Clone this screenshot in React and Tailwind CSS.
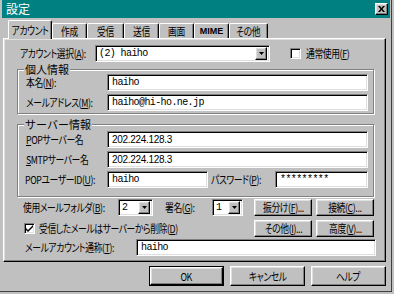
import React from 'react'

const sunken = "bg-white border border-t-[#808080] border-l-[#808080] border-b-white border-r-white shadow-[inset_1px_1px_0_#000,inset_-1px_-1px_0_#dfdfdf]"
const raised = "bg-[#c0c0c0] border border-t-white border-l-white border-b-black border-r-black shadow-[inset_-1px_-1px_0_#808080,inset_1px_1px_0_#dfdfdf]"
// MS PGothic is much narrower than Noto, so the labels are squeezed horizontally
const jpBase = "inline-block font-['Noto_Sans_CJK_JP',sans-serif] [font-feature-settings:'palt'] text-[11px] tracking-[-0.5px] leading-none text-black whitespace-nowrap shrink-0 scale-x-[0.8]"
const jp = `${jpBase} origin-left`
const jpC = `${jpBase} origin-center`
const mono = "font-['Liberation_Mono',monospace] text-[10px] tracking-[-0.6px] leading-none text-black"
const ip = "font-['Liberation_Sans',sans-serif] text-[10px] tracking-[-0.3px] leading-none text-black"

function Label({ className, children }) {
  return (
    <div className={`${className} shrink-0 flex items-center`}>
      <span className={jp}>{children}</span>
    </div>
  )
}

function Arrow() {
  return (
    <div className={`${raised} w-[12px] h-[13px] shrink-0 flex items-center justify-center`}>
      <svg width="5" height="3" viewBox="0 0 5 3"><path d="M0 0h5L2.5 3z" fill="#000" /></svg>
    </div>
  )
}

function Combo({ className, children }) {
  return (
    <div className={`${sunken} ${className} shrink-0 h-[17px] flex items-center pl-[3px] pr-[2px] justify-between`}>
      <span className={mono}>{children}</span>
      <Arrow />
    </div>
  )
}

function Check({ checked }) {
  return (
    <div className={`${sunken} w-[11px] h-[11px] shrink-0 flex items-center justify-center`}>
      {checked && (
        <svg width="7" height="7" viewBox="0 0 7 7"><path d="M0 3l2 2 5-5v2L2 7 0 5z" fill="#000" /></svg>
      )}
    </div>
  )
}

function Btn({ className, children }) {
  return (
    <div className={`${raised} ${className} shrink-0 h-[17px] flex items-center justify-center`}>
      <span className={jpC}>{children}</span>
    </div>
  )
}

function Tab({ className, active, children }) {
  return (
    <div
      className={`${className} bg-[#c0c0c0] border-l border-t border-l-white border-t-white border-r border-r-black shadow-[inset_-1px_0_0_#808080] rounded-t-[2px] flex justify-center ${active ? 'h-[19px] -mb-[1px] z-10 relative pt-[4px]' : 'h-[15px] pt-[2px]'}`}
    >
      {children}
    </div>
  )
}

function Group({ className, title, children }) {
  return (
    <fieldset className={`${className} border border-[#808080] shadow-[inset_1px_1px_0_#fff,1px_1px_0_#fff] px-0`}>
      <legend className="ml-[6px] px-[1px] h-[10px] bg-[#c0c0c0] flex items-center">
        <span className="font-['Noto_Sans_CJK_JP',sans-serif] text-[11px] leading-none text-black whitespace-nowrap">{title}</span>
      </legend>
      {children}
    </fieldset>
  )
}

function Edit({ className, font, children }) {
  return (
    <div className={`${sunken} ${className} h-[17px] shrink-0 flex items-center pl-[4px]`}>
      <span className={font || mono}>{children}</span>
    </div>
  )
}

export default function App() {
  return (
    <div className="w-[394px] h-[294px] bg-[#c0c0c0] overflow-hidden">
      <div className="w-[392px] h-[292px] border-r border-b border-r-[#404040] border-b-[#404040] flex flex-col">
        <div className="h-[18px] shrink-0 ml-[2px] mr-[1px] bg-[#008080] flex items-center justify-between pl-[4px] pr-[2px]">
          <span className="font-['Noto_Sans_CJK_JP',sans-serif] text-[12px] leading-none text-white">設定</span>
          <div className={`${raised} w-[13px] h-[12px] flex items-center justify-center`}>
            <svg width="7" height="6" viewBox="0 0 7 6"><path d="M0 0h2l1.5 2L5 0h2L4.5 3 7 6H5L3.5 4 2 6H0l2.5-3z" fill="#000" /></svg>
          </div>
        </div>

        <div className="mt-[3px] ml-[8px] h-[17px] shrink-0 flex items-end">
          <Tab className="w-[44px]" active><span className={jpC}>アカウント</span></Tab>
          <Tab className="w-[35px]"><span className={jpC}>作成</span></Tab>
          <Tab className="w-[37px]"><span className={jpC}>受信</span></Tab>
          <Tab className="w-[35px]"><span className={jpC}>送信</span></Tab>
          <Tab className="w-[35px]"><span className={jpC}>画面</span></Tab>
          <Tab className="w-[35px]">
            <span className="font-['Liberation_Sans',sans-serif] text-[9px] font-bold leading-none pt-[1px]">MIME</span>
          </Tab>
          <Tab className="w-[39px]"><span className={jpC}>その他</span></Tab>
        </div>

        <div className={`${raised} ml-[3px] w-[383px] h-[224px] shrink-0 flex flex-col`}>
          <div className="mt-[6px] flex items-center">
            <Label className="ml-[16px] w-[75px]">アカウント選択(<u>A</u>):</Label>
            <Combo className="w-[175px]">(2) haiho</Combo>
            <div className="ml-[20px]"><Check /></div>
            <span className={`${jp} ml-[5px]`}>通常使用(<u>F</u>)</span>
          </div>

          <Group className="mt-[2px] ml-[13px] w-[357px] pb-[2px]" title="個人情報">
            <div className="flex items-center">
              <Label className="ml-[8px] w-[81px]">本名(<u>N</u>):</Label>
              <Edit className="w-[261px]">haiho</Edit>
            </div>
            <div className="mt-[3px] flex items-center">
              <Label className="ml-[8px] w-[81px]">メールアドレス(<u>M</u>):</Label>
              <Edit className="w-[261px]">haiho@hi-ho.ne.jp</Edit>
            </div>
          </Group>

          <Group className="mt-[5px] ml-[13px] w-[357px] pb-[8px]" title="サーバー情報">
            <div className="mt-[2px] flex items-center">
              <Label className="ml-[8px] w-[81px]"><u>P</u>OPサーバー名</Label>
              <Edit className="w-[261px]" font={ip}>202.224.128.3</Edit>
            </div>
            <div className="mt-[3px] flex items-center">
              <Label className="ml-[8px] w-[81px]"><u>S</u>MTPサーバー名</Label>
              <Edit className="w-[261px]" font={ip}>202.224.128.3</Edit>
            </div>
            <div className="mt-[3px] flex items-center">
              <Label className="ml-[7px] w-[82px]">POPユーザーID(<u>U</u>):</Label>
              <Edit className="w-[101px]">haiho</Edit>
              <Label className="ml-[3px] w-[64px]">パスワード(<u>P</u>):</Label>
              <Edit className="w-[93px]">*********</Edit>
            </div>
          </Group>

          <div className="mt-[2px] flex items-center">
            <Label className="ml-[19px] w-[95px]">使用メールフォルダ(<u>B</u>):</Label>
            <Combo className="w-[35px]">2</Combo>
            <Label className="ml-[12px] w-[47px]">署名(<u>G</u>):</Label>
            <Combo className="w-[31px]">1</Combo>
            <Btn className="ml-[11px] w-[58px]">振分け(<u>F</u>)...</Btn>
            <Btn className="ml-[4px] w-[58px]">接続(<u>C</u>)...</Btn>
          </div>

          <div className="mt-[4px] flex items-center">
            <div className="w-[250px] shrink-0 flex items-center">
              <div className="ml-[20px]"><Check checked /></div>
              <span className={`${jp} ml-[4px]`}>受信したメールはサーバーから削除(<u>D</u>)</span>
            </div>
            <Btn className="w-[58px]">その他(<u>I</u>)...</Btn>
            <Btn className="ml-[4px] w-[58px]">高度(<u>V</u>)...</Btn>
          </div>

          <div className="mt-[2px] flex items-center">
            <Label className="ml-[21px] w-[111px]">メールアカウント通称(<u>T</u>):</Label>
            <Edit className="w-[240px]">haiho</Edit>
          </div>
        </div>

        <div className="mt-[4px] flex justify-end pr-[5px] gap-[6px]">
          <div className="border border-black">
            <Btn className="w-[73px] h-[18px]">OK</Btn>
          </div>
          <Btn className="w-[75px] h-[20px]">キャンセル</Btn>
          <Btn className="w-[75px] h-[20px]">ヘルプ</Btn>
        </div>
      </div>
    </div>
  )
}
